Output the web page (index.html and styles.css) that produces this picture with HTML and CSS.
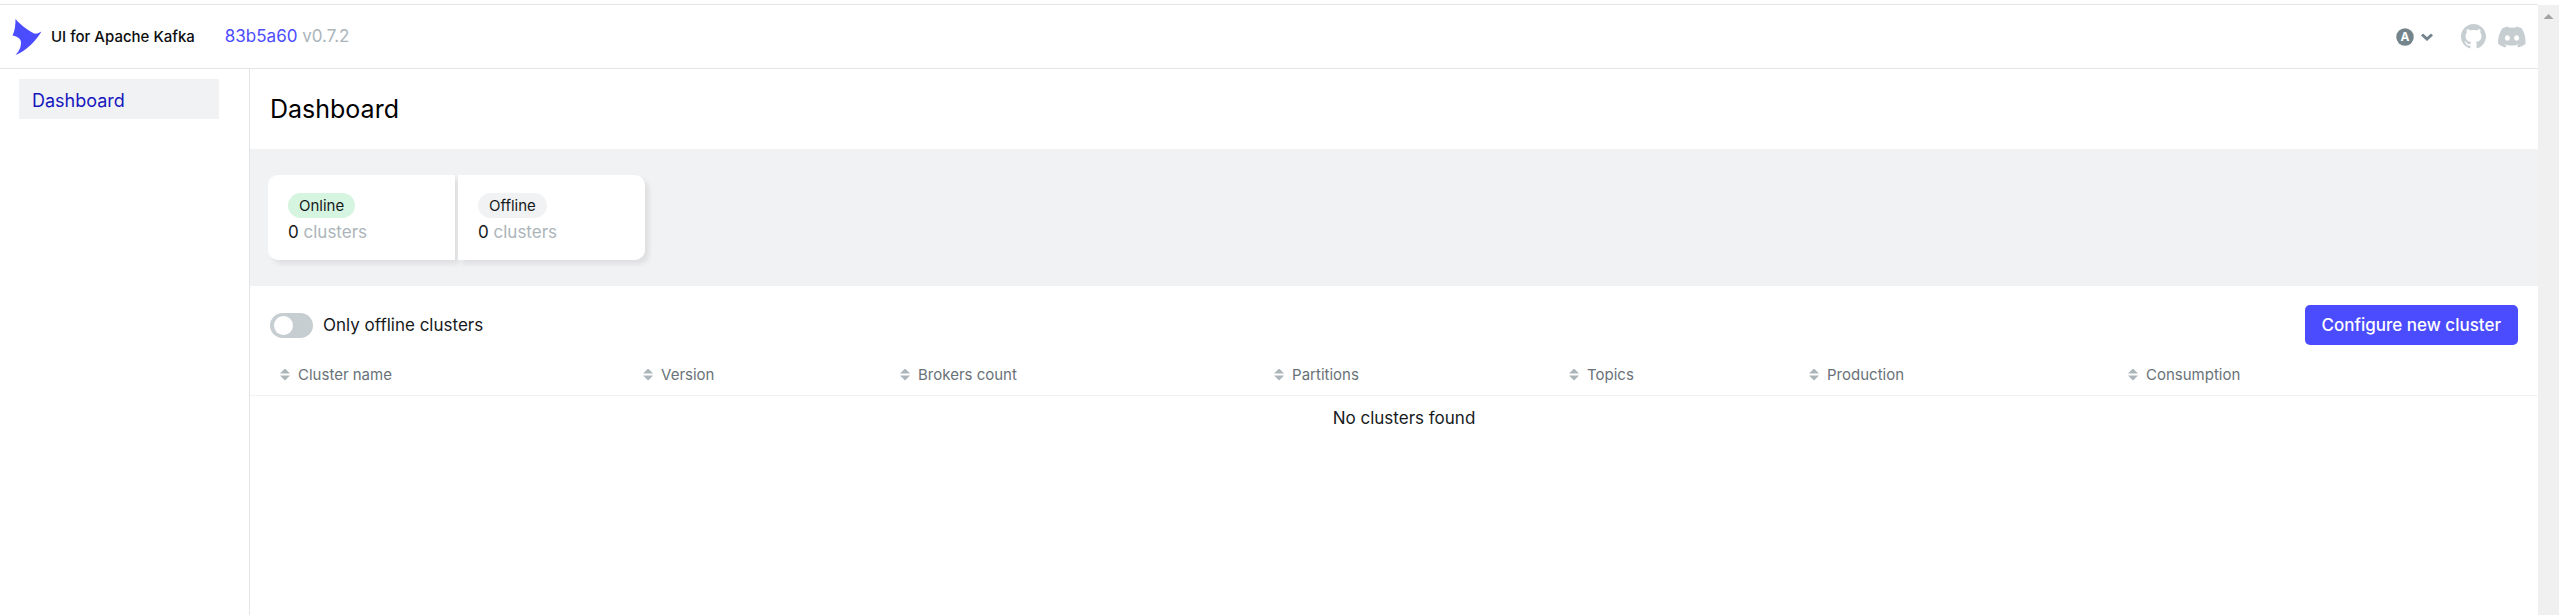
FILE: index.html
```html
<!DOCTYPE html>
<html lang="en">
<head>
<meta charset="utf-8">
<title>UI for Apache Kafka</title>
<link rel="stylesheet" href="styles.css">
</head>
<body>
<div class="app">
  <div class="screen">
    <header class="navbar">
      <a class="brand" href="#">
        <svg class="brand-logo" viewBox="0 0 30 38" aria-hidden="true"><path d="M3.500 1C9 8 18 13 22 15.500C25 16 27 15 29.500 13.500C24 23 14 33 3.500 37C7 33 9 30 9 24C8.500 20 4 18 0.500 17.500C3 13 3.500 7 3.500 1Z"/></svg>
        <span class="brand-name">UI for Apache Kafka</span>
      </a>
      <p class="version"><a class="commit" href="#">83b5a60</a> <span>v0.7.2</span></p>
      <div class="tools">
        <button class="theme" type="button" aria-label="Theme: auto">
          <svg class="theme-icon" viewBox="0 0 18 18" aria-hidden="true"><circle cx="9" cy="9" r="8.750"/><text x="9" y="13" text-anchor="middle">A</text></svg>
          <svg class="chevron" viewBox="0 0 12 8" aria-hidden="true"><path d="M1 1.500L6 6L11 1.500"/></svg>
        </button>
        <a class="social" href="#" aria-label="GitHub"><svg class="github" viewBox="0 0 16 16" aria-hidden="true"><path d="M8 0C3.580 0 0 3.580 0 8c0 3.540 2.290 6.530 5.470 7.590.4.070.55-.17.55-.38 0-.19-.01-.82-.01-1.490-2.010.37-2.530-.49-2.690-.94-.09-.23-.48-.94-.82-1.130-.28-.15-.68-.52-.01-.53.63-.01 1.080.58 1.230.82.72 1.210 1.870.87 2.330.66.07-.52.28-.87.51-1.070-1.780-.2-3.640-.89-3.640-3.950 0-.87.31-1.590.82-2.150-.08-.2-.36-1.020.08-2.120 0 0 .67-.21 2.200.82.64-.18 1.320-.27 2-.27s1.360.09 2 .27c1.530-1.040 2.200-.82 2.200-.82.44 1.100.16 1.920.08 2.120.51.56.82 1.270.82 2.150 0 3.070-1.870 3.750-3.650 3.950.29.25.54.73.54 1.480 0 1.070-.01 1.930-.01 2.200 0 .21.15.46.55.38A8.010 8.010 0 0 0 16 8c0-4.420-3.580-8-8-8z"/></svg></a>
        <a class="social" href="#" aria-label="Discord"><svg class="discord" viewBox="0 0 24 19" aria-hidden="true"><path d="M20.317 1.870A19.800 19.800 0 0 0 15.432.355c-.21.375-.455.880-.608 1.250a18.300 18.300 0 0 0-5.487 0A12.600 12.600 0 0 0 8.720.355 19.700 19.700 0 0 0 3.677 1.870C.533 6.547-.320 11.110.099 15.600a19.900 19.900 0 0 0 5.993 3.030c.480-.660.910-1.360 1.226-1.994a13 13 0 0 1-1.872-.892c.130-.100.250-.190.372-.292 3.928 1.793 8.180 1.793 12.062 0 .120.100.245.200.373.292-.600.350-1.220.640-1.873.892.360.698.772 1.362 1.225 1.993a19.800 19.800 0 0 0 6.002-3.030c.500-5.177-.838-9.674-3.290-13.729zM8.020 12.830c-1.183 0-2.157-1.085-2.157-2.419s.955-2.419 2.157-2.419 2.176 1.096 2.157 2.419c0 1.334-.956 2.419-2.157 2.419zm7.975 0c-1.183 0-2.157-1.085-2.157-2.419s.955-2.419 2.157-2.419 2.176 1.096 2.157 2.419c0 1.334-.946 2.419-2.157 2.419z"/></svg></a>
      </div>
    </header>
    <div class="body">
      <nav class="sidebar"><a class="nav-link" href="#">Dashboard</a></nav>
      <main class="main">
        <h1 class="title">Dashboard</h1>
        <section class="metrics">
          <div class="card"><span class="badge online">Online</span><p class="count">0 <span>clusters</span></p></div>
          <div class="card"><span class="badge">Offline</span><p class="count">0 <span>clusters</span></p></div>
        </section>
        <div class="toolbar">
          <label class="filter"><input class="switch" type="checkbox" role="switch">Only offline clusters</label>
          <button class="primary" type="button">Configure new cluster</button>
        </div>
        <table class="clusters">
          <colgroup><col class="c-name"><col class="c-version"><col class="c-brokers"><col class="c-partitions"><col class="c-topics"><col class="c-production"><col></colgroup>
          <thead><tr>
            <th scope="col"><span class="sort">Cluster name</span></th>
            <th scope="col"><span class="sort">Version</span></th>
            <th scope="col"><span class="sort">Brokers count</span></th>
            <th scope="col"><span class="sort">Partitions</span></th>
            <th scope="col"><span class="sort">Topics</span></th>
            <th scope="col"><span class="sort">Production</span></th>
            <th scope="col"><span class="sort">Consumption</span></th>
          </tr></thead>
          <tbody><tr><td colspan="7">No clusters found</td></tr></tbody>
        </table>
      </main>
    </div>
  </div>
  <div class="scroll-track" aria-hidden="true"><span class="scroll-up"></span></div>
</div>
</body>
</html>
```
FILE: styles.css
```css
* { box-sizing: border-box; }
body {
  margin: 0;
  background: #fff;
  color: #171a1c;
  font-family: Inter, "Liberation Sans", sans-serif;
  font-size: 17px;
  line-height: 25px;
}
a { color: inherit; text-decoration: none; }
p, h1 { margin: 0; }
button { font: inherit; border: 0; background: none; cursor: pointer; }

.app { display: flex; min-height: 100vh; padding-top: 4px; }
.screen {
  flex: 1;
  min-width: 0;
  display: flex;
  flex-direction: column;
  border-top: 1px solid #e3e6e8;
}
.navbar {
  display: flex;
  align-items: center;
  height: 64px;
  padding: 0 12px;
  border-bottom: 1px solid #e3e6e8;
}
.brand { display: flex; align-items: center; gap: 9px; }
.brand-logo { width: 30px; height: 38px; fill: #4c4cff; }
.brand-name { font-size: 15px; font-weight: 500; color: #0b0d0e; }
.version { margin-left: 30px; color: #abb5ba; }
.commit { color: #4c4cff; }
.tools { display: flex; align-items: center; margin-left: auto; gap: 12px; }
.theme { display: flex; align-items: center; gap: 7px; padding: 0; margin-right: 16px; }
.theme-icon { width: 18px; height: 18px; fill: #73848c; }
.theme-icon text { fill: #fff; font-size: 12px; font-weight: 700; }
.chevron { width: 12px; height: 8px; fill: none; stroke: #73848c; stroke-width: 3; }
.social { display: flex; fill: #c7ced1; }
.github { width: 25px; height: 25px; }
.discord { width: 28px; height: 22px; }

.body { flex: 1; display: flex; }
.sidebar { width: 250px; padding: 10px 30px 0 19px; border-right: 1px solid #e3e6e8; }
.nav-link { display: block; padding: 9px 13px 6px; background: #f1f2f3; color: #1717bf; font-size: 18px; }
.main { flex: 1; min-width: 0; }
.title {
  padding: 20px;
  font-size: 25px;
  font-weight: 400;
  line-height: 40px;
  color: #000;
}
.metrics { display: flex; gap: 3px; padding: 26px 18px; background: #f1f2f4; }
.card {
  width: 187px;
  padding: 18px 20px 13px;
  background: #fff;
  box-shadow: 4px 4px 5px rgba(0, 0, 0, 0.08);
}
.card:first-child { border-radius: 10px 0 0 10px; }
.card:last-child { border-radius: 0 10px 10px 0; }
.badge {
  display: block;
  width: fit-content;
  padding: 0 11px;
  border-radius: 13px;
  background: #f1f2f3;
  font-size: 15px;
}
.online { background: #d6f5e0; }
.count { line-height: 29px; }
.count span { color: #abb5ba; }
.toolbar {
  display: flex;
  align-items: center;
  justify-content: space-between;
  padding: 19px 20px 12px;
}
.filter { display: flex; align-items: center; gap: 10px; }
.switch {
  appearance: none;
  width: 43px;
  height: 25px;
  margin: 0;
  padding: 3px 4px;
  border-radius: 13px;
  background: #c7ced1;
}
.switch::before {
  content: "";
  display: block;
  width: 19px;
  height: 19px;
  border-radius: 50%;
  background: #fff;
}
.switch:checked::before { margin-left: auto; }
.primary {
  height: 40px;
  padding: 0 17px;
  border-radius: 5px;
  background: #4c4cff;
  color: #fff;
  font-weight: 500;
}
.clusters { width: 100%; table-layout: fixed; border-collapse: collapse; }
.c-name { width: 15.87%; }
.c-version { width: 11.23%; }
.c-brokers { width: 16.35%; }
.c-partitions { width: 12.89%; }
.c-topics { width: 10.49%; }
.c-production { width: 13.94%; }
.clusters th {
  padding: 5px 30px 8px;
  border-bottom: 1px solid #f1f2f3;
  color: #697278;
  font-size: 15px;
  font-weight: 400;
  text-align: left;
}
.clusters td { padding: 10px 0 10px 20px; text-align: center; }
.sort { display: flex; align-items: center; gap: 8px; }
.sort::before {
  content: "";
  width: 10px;
  height: 12px;
  background: #abb5ba;
  clip-path: polygon(50% 0, 100% 42%, 0 42%, 0 58%, 100% 58%, 50% 100%, 0 58%, 0 42%);
}
.scroll-track { width: 21px; margin-top: 1px; padding-top: 9px; background: #f0f0f0; }
.scroll-up {
  display: block;
  width: 10px;
  height: 5px;
  margin: 0 auto;
  background: #a3a3a3;
  clip-path: polygon(50% 0, 100% 100%, 0 100%);
}
```
